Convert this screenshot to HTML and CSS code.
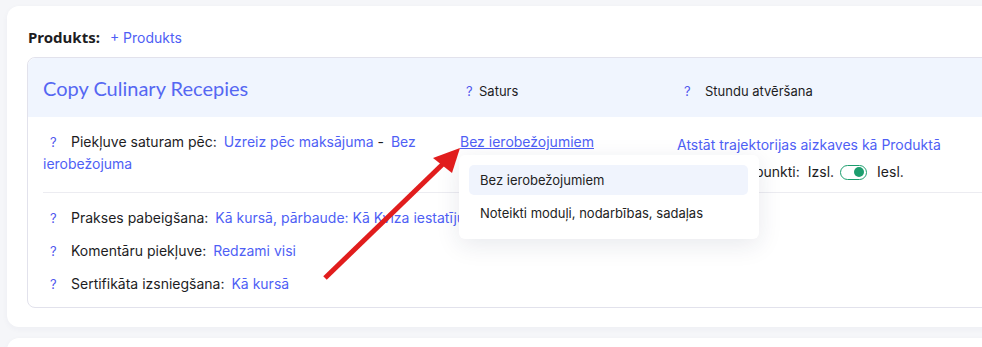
FILE: index.html
```html
<!DOCTYPE html>
<html lang="lv">
<head>
    <meta charset="UTF-8">
    <meta name="viewport" content="width=device-width, initial-scale=1.0">
    <title>Produkts</title>
    <link rel="stylesheet" href="styles.css">
</head>
<body>
    <div class="panel">
        <div class="panel-title">
            <span class="label">Produkts:</span>
            <a class="add-link" href="#">+ Produkts</a>
        </div>
        <div class="product">
            <div class="product-head">
                <div class="col col-name">Copy Culinary Recepies</div>
                <div class="col col-head"><span class="q q-short">?</span>Saturs</div>
                <div class="col col-head"><span class="q">?</span>Stundu atvēršana</div>
            </div>
            <div class="product-main">
                <div class="col col-access">
                    <span class="q">?</span>Piekļuve saturam pēc: <a class="val" href="#">Uzreiz pēc maksājuma</a> <span class="dash">-</span> <a class="val" href="#">Bez ierobežojuma</a>
                </div>
                <div class="col col-content">
                    <a class="val underline" href="#">Bez ierobežojumiem</a>
                    <div class="dropdown">
                        <div class="dropdown-item active">Bez ierobežojumiem</div>
                        <div class="dropdown-item">Noteikti moduļi, nodarbības, sadaļas</div>
                    </div>
                </div>
                <div class="col col-open">
                    <a class="val" href="#">Atstāt trajektorijas aizkaves kā Produktā</a>
                    <div class="switch-row">
                        <span>Atvēršanas punkti:</span>
                        <span class="off">Izsl.</span>
                        <span class="switch"><span class="knob"></span></span>
                        <span>Iesl.</span>
                    </div>
                </div>
            </div>
            <div class="product-rows">
                <div class="row"><span class="q">?</span>Prakses pabeigšana: <a class="val" href="#">Kā kursā, pārbaude: Kā Kvīza iestatījumos</a></div>
                <div class="row"><span class="q">?</span>Komentāru piekļuve: <a class="val" href="#">Redzami visi</a></div>
                <div class="row"><span class="q">?</span>Sertifikāta izsniegšana: <a class="val" href="#">Kā kursā</a></div>
            </div>
        </div>
    </div>
    <div class="panel panel-next"></div>

    <!-- annotation arrow -->
    <svg class="arrow" width="982" height="347" viewBox="0 0 982 347">
        <line x1="325" y1="278" x2="446" y2="161" stroke="#e11d1d" stroke-width="5"/>
        <polygon points="460,148 433,158 452,173" fill="#e11d1d"/>
    </svg>
</body>
</html>
```

FILE: styles.css
```css
body {
    margin: 0;
    padding: 6px 0 0 7px;
    background-color: #f5f6f9;
    font-family: Inter, "Noto Sans", sans-serif;
    font-size: 14px;
    color: #1d1d1f;
    overflow: hidden;
    height: 347px;
    box-sizing: border-box;
}
a {
    color: #4f5ff5;
    text-decoration: none;
}
.panel {
    width: 1100px;
    background-color: #fff;
    border-radius: 12px;
    padding: 21px 20px 19px 20px;
    box-sizing: border-box;
    box-shadow: 0 2px 6px rgba(40, 50, 90, 0.04);
}
.panel-next {
    margin-top: 11px;
    height: 40px;
    padding: 0;
}
.panel-title {
    display: flex;
    align-items: baseline;
    gap: 10px;
    margin-left: 1px;
    height: 30px;
}
.label {
    font-family: "Noto Sans", sans-serif;
    font-weight: 700;
    font-size: 15px;
}
.product {
    border: 1px solid #e2e2ec;
    border-radius: 8px;
}
.product-head {
    display: grid;
    grid-template-columns: 416px 218px 1fr;
    align-items: center;
    height: 59px;
    padding-left: 15px;
    background-color: #f0f5fe;
    border-radius: 8px 8px 0 0;
}
.col-name {
    font-family: Lato, sans-serif;
    font-size: 20px;
    color: #5567f2;
}
.col-head {
    font-size: 13px;
    padding-top: 6px;
}
.q {
    display: inline-block;
    width: 21px;
    margin-left: 7px;
    color: #5158ee;
    font-size: 13px;
}
.q-short {
    width: 13px;
}
.product-main {
    display: grid;
    grid-template-columns: 416px 218px 1fr;
    padding: 14px 0 9px 0;
    margin-left: 15px;
    border-bottom: 1px solid #ececf1;
    line-height: 22px;
}
.col-access {
    padding-right: 30px;
}
.val {
    margin-left: 3px;
}
.col-content {
    position: relative;
    padding-left: 1px;
}
.underline {
    text-decoration: underline;
    margin-left: 0;
}
.col-open {
    padding-top: 3px;
}
.col-open .val {
    margin-left: 0;
}
.switch-row {
    display: flex;
    align-items: center;
    gap: 8px;
    margin-top: 5px;
}
.switch {
    display: inline-block;
    width: 25px;
    height: 13px;
    border: 1.5px solid #1d9e6e;
    border-radius: 9px;
    position: relative;
    margin: 0 2px 0 -2px;
}
.knob {
    position: absolute;
    right: 2px;
    top: 1.5px;
    width: 10px;
    height: 10px;
    border-radius: 50%;
    background-color: #1d9e6e;
}
.dropdown {
    position: absolute;
    left: 0;
    top: 24px;
    width: 300px;
    padding: 10px 11px 11px 10px;
    box-sizing: border-box;
    background-color: #fff;
    border-radius: 6px;
    box-shadow: 0 6px 24px rgba(30, 40, 80, 0.1);
    z-index: 10;
    font-size: 13px;
}
.dropdown-item {
    height: 30px;
    line-height: 30px;
    padding-left: 11px;
    border-radius: 5px;
    color: #222;
}
.dropdown-item + .dropdown-item {
    margin-top: 3px;
}
.dropdown-item.active {
    background-color: #f0f4fd;
}
.product-rows {
    padding: 14px 0 12px 15px;
    line-height: 22px;
}
.row + .row {
    margin-top: 11px;
}
.arrow {
    position: absolute;
    left: 0;
    top: 0;
    pointer-events: none;
    z-index: 20;
}
```
